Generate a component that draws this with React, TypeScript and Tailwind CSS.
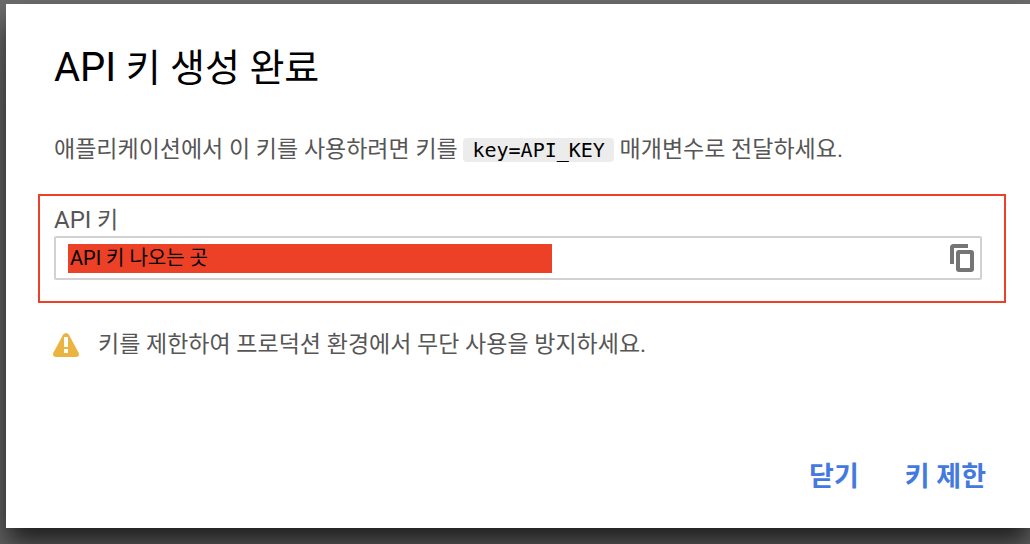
import React from "react";

function CopyIcon() {
  return (
    <svg viewBox="0 0 24 28" className="h-7 w-6" fill="none" stroke="#757575" aria-hidden="true">
      <path d="M2 20V3.500Q2 2 3.500 2H18" strokeWidth="4" />
      <rect x="8" y="8" width="14" height="18" rx="1" strokeWidth="4" />
    </svg>
  );
}

function WarningIcon() {
  return (
    <svg viewBox="0 0 26 24" className="h-6 w-[26px] shrink-0" aria-hidden="true">
      <path
        d="M10.200 1.600Q13-1.500 15.800 1.600L25.500 19.500Q27 23.500 23 24H3Q-1 23.500 .5 19.500Z"
        fill="#ebb440"
      />
      <path d="M11 4h4v10h-4zM11 16h4v4h-4z" fill="#fff" />
    </svg>
  );
}

export default function App() {
  return (
    <div className="flex min-h-screen bg-linear-to-b from-[#6b6b6b] from-0% via-[#606060] via-20% to-[#606060] pt-1 pb-4 pl-[6px] font-[Roboto,'Noto_Sans_CJK_KR',sans-serif] text-[23px] leading-8 text-[#565656]">
      <main
        role="dialog"
        aria-labelledby="dialog-title"
        className="flex grow flex-col bg-white pt-10 pb-[35px] shadow-[0_16px_24px_-2px_rgba(0,0,0,0.7)]"
      >
        <h1 id="dialog-title" className="px-12 text-[38px] leading-12 text-black">
          <span className="text-[40px]">API</span> 키 생성 완료
        </h1>
        <p className="mt-[42px] px-12">
          애플리케이션에서 이 키를 사용하려면 키를{" "}
          <code className="inline-block rounded-sm bg-[#ececec] px-[9px] font-['DejaVu_Sans_Mono',monospace] text-[20px] leading-6 text-black">
            key=API_KEY
          </code>{" "}
          매개변수로 전달하세요.
        </p>

        <section className="mt-7 mr-6 ml-8 border-2 border-[#ea4128] px-[14px] pt-[9px] pb-[21px]">
          <label htmlFor="api-key" className="block leading-[31px]">
            <span className="text-[24px]">API</span> 키
          </label>
          <div className="mr-2 flex h-11 items-center justify-between rounded-xs border-2 border-[#d2d2d2] pr-[6px] pl-3">
            <input
              id="api-key"
              readOnly
              defaultValue="API 키 나오는 곳"
              className="h-[29px] w-[484px] bg-[#ec4027] px-[2px] text-[20px] text-black outline-none"
            />
            <button type="button" aria-label="복사">
              <CopyIcon />
            </button>
          </div>
        </section>

        <div className="mt-[26px] flex items-center gap-[19px] pr-12 pl-[47px]">
          <WarningIcon />
          <p>키를 제한하여 프로덕션 환경에서 무단 사용을 방지하세요.</p>
        </div>

        <div className="mt-auto flex justify-end gap-[46px] pr-11 text-[27px] font-bold text-[#4479e0]">
          <button type="button">닫기</button>
          <button type="button">키 제한</button>
        </div>
      </main>
    </div>
  );
}
